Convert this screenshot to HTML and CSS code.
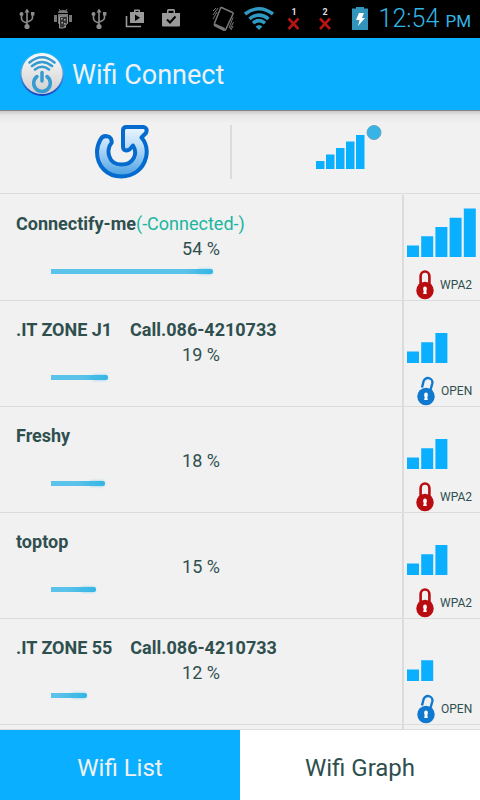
FILE: index.html
```html
<!DOCTYPE html>
<html lang="en">
<head>
<meta charset="utf-8">
<meta name="viewport" content="width=device-width, initial-scale=1">
<title>Wifi Connect</title>
<link rel="stylesheet" href="styles.css">
</head>
<body>
<svg class="defs" width="0" height="0" aria-hidden="true">
  <defs>
    <symbol id="usb" viewBox="0 0 36 38">
      <g fill="none" stroke="#8c8c8c" stroke-width="1.6"><path d="M18 12v15M12.500 14v4.500q0 3 5.500 4.500M23.500 14v3.500q0 3-5.500 4.500"/></g>
      <g fill="#8c8c8c"><path d="M18 8.500l2.500 4h-5zM22 12h3.400v3.400H22z"/><circle cx="12.500" cy="14" r="2"/><circle cx="18" cy="26.500" r="2.600"/></g>
    </symbol>
    <symbol id="bars" viewBox="0 0 69 49">
      <path d="M0 37.500h12V49H0zM14.200 28.300h12V49h-12zM28.400 19h12v30h-12zM42.600 9.700h12V49h-12zM56.800.400h12V49h-12z"/>
    </symbol>
    <symbol id="bars3" viewBox="0 0 69 49">
      <path d="M0 37.500h12V49H0zM14.200 28.300h12V49h-12zM28.400 19h12v30h-12z"/>
    </symbol>
    <symbol id="bars2" viewBox="0 0 69 49">
      <path d="M0 37.500h12V49H0zM14.200 28.300h12V49h-12z"/>
    </symbol>
    <symbol id="locked" viewBox="0 0 18 30">
      <path d="M4.600 14V6.200a4.400 4.700 0 0 1 8.800 0V14" fill="none" stroke="#b90c10" stroke-width="2.600"/>
      <circle cx="9" cy="20.500" r="8.700" fill="#b90c10"/>
      <path d="M7.200 18.200a1.800 1.800 0 0 1 3.600 0v2.300h-.6l.6 3.500H7.200l.6-3.500h-.6z" fill="#fff"/>
    </symbol>
    <symbol id="unlocked" viewBox="0 0 18 30">
      <path d="M5 11.500L6.500 5.500a4.400 4.400 0 0 1 8.800 2L13.500 14" fill="none" stroke="#0f78cf" stroke-width="2.400"/>
      <circle cx="9" cy="20.500" r="8.700" fill="#0f78cf"/>
      <path d="M7.200 18.200a1.800 1.800 0 0 1 3.600 0v2.300h-.6l.6 3.500H7.200l.6-3.500h-.6z" fill="#fff"/>
    </symbol>
  </defs>
</svg>
<div class="app">
  <div class="status">
    <div class="status-group">
      <svg width="36" height="38"><use href="#usb"/></svg>
      <svg width="36" height="38"><g fill="#777"><path d="M13 13q0-3 5-3t5 3zM13 14h10v9q0 1-1 1h-1v4h-2v-4h-2v4h-2v-4h-1q-1 0-1-1zM9 15h3v7H9zM24 15h3v7h-3z"/><path d="M14 9l1.500 2M22 9l-1.500 2" stroke="#777"/></g><path d="M14.500 16.500l7-.5 1 1v6l-4 5h-4z" fill="#333" stroke="#999"/><path d="M16 18h1.500v1.500H16zM19 19h1.500v1.500H19zM16.500 22H18v1.500h-1.500zM19 23h1.500v1.500H19z" fill="#aaa"/></svg>
      <svg width="36" height="38"><use href="#usb"/></svg>
      <svg width="36" height="38"><path d="M13 12h4v-1.500q0-1 1-1h4q1 0 1 1V12h4v11H13zm5.500 0h3v-1h-3z" fill="#9a9a9a" fill-rule="evenodd"/><path d="M9.500 16v10.500H24" fill="none" stroke="#9a9a9a" stroke-width="1.600"/><path d="M18 14.500v6.500l5-3.300z" fill="#000"/></svg>
      <svg width="36" height="38"><path d="M9 13h5v-2.500q0-1.500 1.500-1.500h5q1.500 0 1.500 1.500V13h5v12.500q0 1-1 1H10q-1 0-1-1zm6.500 0h5v-2.300h-5z" fill="#9a9a9a" fill-rule="evenodd"/><path d="M14 19.500l3 3 5.500-6" fill="none" stroke="#000" stroke-width="2"/></svg>
    </div>
    <div class="status-group">
      <svg width="36" height="38"><g fill="none" stroke="#777"><path d="M16.500 7.500l11 5q1 .5.500 1.500l-7 15q-.5 1.500-2 1l-9-4.500q-1.200-.7-.6-2l6-15q.3-1.300 1.100-1z" stroke-width="1.500"/><path d="M8 11l3-3M8 15l5-7M8 19l4-7M28 17.500L24 28M28.500 22L25 29M28 26l-2 4" /></g><path d="M9 23l11 5-1 3-10-5z" fill="#777"/></svg>
      <svg width="36" height="38"><g fill="none" stroke="#2f99c2" stroke-width="3.600"><path d="M4 14q14-10.500 28 0M8.500 18.800q9.500-7.500 19 0M12 23.200q6-5 12 0"/></g><path d="M14.500 26.500q3.500-3 7 0L18 30z" fill="#2f99c2"/></svg>
      <svg width="33" height="38"><text class="sim" x="17" y="15">1</text><path d="M11.500 18.500l10 10.500M21.500 18.500l-10 10.500" stroke="#b51414" stroke-width="2.600"/></svg>
      <svg width="31" height="38"><text class="sim" x="15" y="15">2</text><path d="M10 18.500L20 29M20 18.500L10 29" stroke="#b51414" stroke-width="2.600"/></svg>
      <svg width="38" height="38"><path d="M11 8.500h4V7h8v1.500h4V30H11z" fill="#3294bb"/><path d="M18 13h5l-2 5h3l-7 8 1.500-6H15z" fill="#fff"/></svg>
      <span class="clock">12:54 <small>PM</small></span>
    </div>
  </div>
  <header class="title-bar">
    <svg width="44" height="46" viewBox="0 0 44 46">
      <defs>
        <linearGradient id="ring" x2="0" y2="1"><stop offset="0" stop-color="#24bdf4"/><stop offset=".5" stop-color="#4b9fe0"/><stop offset="1" stop-color="#123fc0"/></linearGradient>
        <linearGradient id="disc" x2="0" y2="1"><stop offset="0" stop-color="#fafafa"/><stop offset="1" stop-color="#cfcfcf"/></linearGradient>
      </defs>
      <circle cx="22" cy="23" r="22" fill="url(#ring)"/><circle cx="22" cy="22.500" r="20.500" fill="url(#disc)"/>
      <g fill="none" stroke="#369bd0" stroke-linecap="round"><path d="M9.500 11.500Q22 1 34.500 11.500M12 15q10-8 20 0M15 18.500q7-5.500 14 0" stroke-width="2.600"/><path d="M17 25.500a8.300 8.300 0 1 0 10 0" stroke-width="3.500"/><path d="M22 21.500v8.500" stroke-width="3.500"/></g>
    </svg>
    <h1>Wifi Connect</h1>
  </header>
  <div class="toolbar">
    <button type="button" aria-label="Refresh">
      <svg width="54" height="54" viewBox="0 0 54 54"><defs><linearGradient id="arrow" x2="0" y2="1"><stop offset="0" stop-color="#edf6ff"/><stop offset=".4" stop-color="#b9dcf8"/><stop offset="1" stop-color="#48a0e3"/></linearGradient></defs><path d="M5.500 14.500C8.500 9 18 10.500 16.500 18C11 24 12.500 39.500 26.500 39.500C39 39.500 43 28 38 20.500L34.500 24.500Q28.500 27.500 28 21.500V5.500Q28 2 31.500 2H48.500Q53 3 51 8L46.500 12.500C52 19 52.500 26 51 32.500C48 44.500 38 51.500 26.500 51.500C12 51.500 2 41 2 27C2 21.500 3.500 18 5.500 14.500Z" fill="url(#arrow)" stroke="#066bce" stroke-width="4" stroke-linejoin="round"/></svg>
    </button>
    <span class="divider"></span>
    <button type="button" aria-label="Signal strength">
      <svg width="66" height="54" viewBox="0 0 66 54"><g fill="#0aafff"><path d="M0 36h8.500v8H0zM10 29.500h8.500V44H10zM20 23h8.500v21H20zM30 16.500h8.500V44H30zM40 10h8.500v34H40z"/></g><circle cx="58" cy="7.500" r="7" fill="#36b4e5" stroke="#66a5c4"/></svg>
    </button>
  </div>
  <main class="list">
    <article class="row">
      <div class="info"><h2>Connectify-me<em>(-Connected-)</em></h2><p>54 %</p><div class="track"><div class="fill" style="width:54%"></div></div></div>
      <div class="side"><svg class="signal"><use href="#bars"/></svg><div class="security"><svg class="lock"><use href="#locked"/></svg><span>WPA2</span></div></div>
    </article>
    <article class="row">
      <div class="info"><h2>.IT ZONE J1    Call.086-4210733</h2><p>19 %</p><div class="track"><div class="fill" style="width:19%"></div></div></div>
      <div class="side"><svg class="signal"><use href="#bars3"/></svg><div class="security open"><svg class="lock"><use href="#unlocked"/></svg><span>OPEN</span></div></div>
    </article>
    <article class="row">
      <div class="info"><h2>Freshy</h2><p>18 %</p><div class="track"><div class="fill" style="width:18%"></div></div></div>
      <div class="side"><svg class="signal"><use href="#bars3"/></svg><div class="security"><svg class="lock"><use href="#locked"/></svg><span>WPA2</span></div></div>
    </article>
    <article class="row">
      <div class="info"><h2>toptop</h2><p>15 %</p><div class="track"><div class="fill" style="width:15%"></div></div></div>
      <div class="side"><svg class="signal"><use href="#bars3"/></svg><div class="security"><svg class="lock"><use href="#locked"/></svg><span>WPA2</span></div></div>
    </article>
    <article class="row">
      <div class="info"><h2>.IT ZONE 55    Call.086-4210733</h2><p>12 %</p><div class="track"><div class="fill" style="width:12%"></div></div></div>
      <div class="side"><svg class="signal"><use href="#bars2"/></svg><div class="security open"><svg class="lock"><use href="#unlocked"/></svg><span>OPEN</span></div></div>
    </article>
    <div class="row-peek"><div class="info"></div><div class="side"></div></div>
  </main>
  <nav class="tabs">
    <button type="button" class="active">Wifi List</button>
    <button type="button">Wifi Graph</button>
  </nav>
</div>
</body>
</html>
```
FILE: styles.css
```css
* { box-sizing: border-box; }
body {
  margin: 0;
  background: #f1f1f1;
  color: #2f4f4f;
  font-family: Roboto, "Liberation Sans", sans-serif;
}
h1, h2, p { margin: 0; }
svg { display: block; flex: none; }
button {
  border: 0;
  padding: 0;
  background: none;
  color: inherit;
  font: inherit;
}
.defs { position: absolute; }
.app { display: flex; flex-direction: column; min-height: 100vh; }

.status {
  display: flex;
  justify-content: space-between;
  height: 38px;
  padding: 0 9px;
  background: #000;
}
.status-group { display: flex; align-items: center; }
.sim { fill: #ddd; font-size: 9px; font-weight: 700; text-anchor: middle; }
.clock {
  padding-top: 2px;
  color: #33b5e5;
  font-size: 25px;
  font-weight: 300;
  line-height: 36px;
  white-space: nowrap;
}
.clock small { font-size: 17px; font-weight: 400; }

.title-bar {
  display: flex;
  align-items: center;
  gap: 8px;
  height: 72px;
  padding: 0 20px;
  background: #0aafff;
  color: #f1f1f1;
}
.title-bar h1 { padding-top: 2px; font-size: 27px; font-weight: 400; line-height: 32px; }

.toolbar {
  display: flex;
  align-items: center;
  height: 84px;
  border-top: 1px solid #888;
  border-bottom: 1px solid #dcdcdc;
  background: linear-gradient(#c8c8c8, #e6e6e6 4px, #f1f1f1 12px);
}
.toolbar button { display: flex; flex: 1; justify-content: center; }
.toolbar button:first-child { padding-left: 14px; }
.toolbar button:last-child { padding-right: 14px; }
.divider { width: 2px; height: 54px; background: #dcdcdc; }
.toolbar button:first-child { flex: 0 0 48%; }

.list {
  display: flex;
  flex: 1;
  flex-direction: column;
  padding-top: 1px;
  border-bottom: 1px solid #dcdcdc;
}
.row { display: flex; height: 106px; border-bottom: 1px solid #dcdcdc; }
.row-peek { display: flex; flex: 1; min-height: 4px; }
.info { flex: 1; min-width: 0; }
.row .info { padding-top: 18px; }
.info h2 {
  padding-left: 16px;
  font-size: 18px;
  font-weight: 700;
  line-height: 22px;
  white-space: pre;
}
.info em { color: #1bb5a0; font-style: normal; font-weight: 400; }
.info p { font-size: 18px; line-height: 28px; text-align: center; }
.track { height: 5px; margin: 6px 51px 0; }
.fill {
  position: relative;
  height: 100%;
  border-radius: 0 2px 2px 0;
  background: linear-gradient(90deg, #5bc2ea calc(100% - 28px), #33b5e5);
}
.fill::after {
  content: "";
  position: absolute;
  right: 0;
  top: 0;
  width: 14px;
  height: 5px;
  border-radius: 2px;
  box-shadow: -1px 0 3px #33b5e599;
}

.side { width: 78px; border-left: 2px solid #dcdcdc; }
.row .side { margin-bottom: -1px; padding: 13px 0 0 3px; }
.signal { width: 69px; height: 49px; fill: #0aafff; }
.security { display: flex; align-items: center; gap: 6px; margin-top: 13px; padding-left: 9px; }
.security.open { padding-left: 10px; }
.lock { width: 18px; height: 30px; }
.security span { font-size: 12px; line-height: 30px; }

.tabs { display: flex; height: 70px; background: #fff; }
.tabs button { flex: 1; padding-top: 6px; font-size: 24px; line-height: 28px; }
.tabs .active { background: #0aafff; color: #f1f1f1; }
```
